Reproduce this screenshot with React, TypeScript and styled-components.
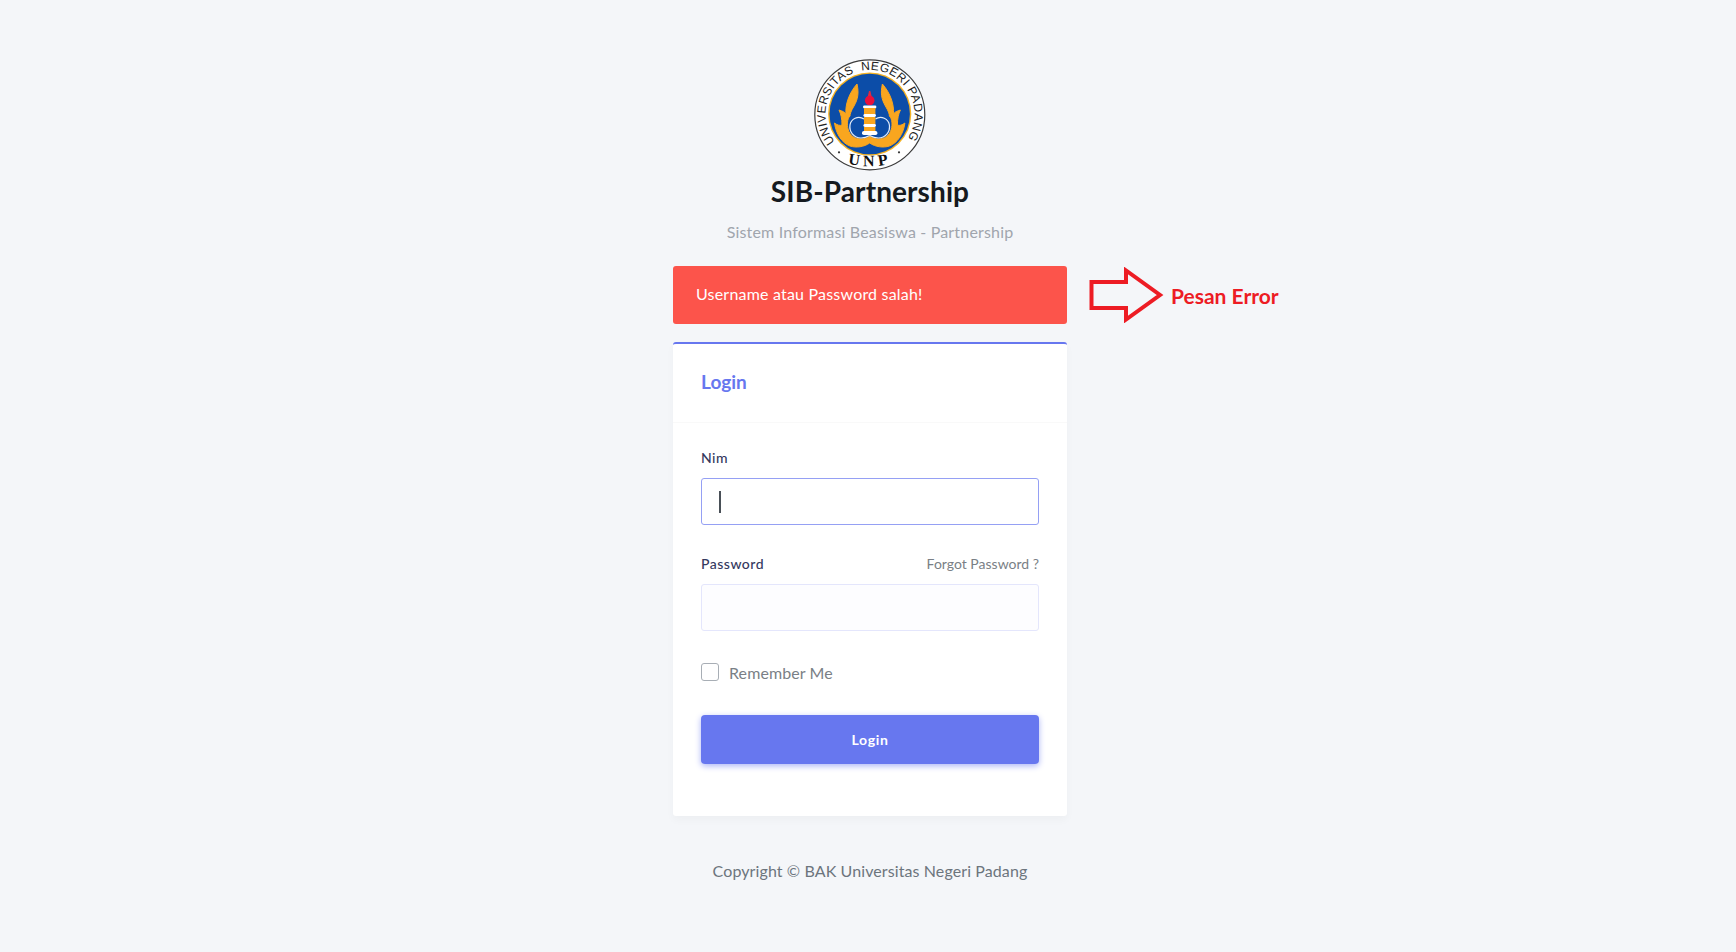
import React from 'react';
import styled, { createGlobalStyle } from 'styled-components';

const GlobalStyle = createGlobalStyle`
  html, body {
    margin: 0;
    padding: 0;
    background: #f4f6f9;
  }
  * {
    box-sizing: border-box;
  }
`;

const Page = styled.div`
  min-height: 952px;
  display: flex;
  flex-direction: column;
  align-items: center;
  padding: 59px 0 0 4px;
  font-family: Lato, "Noto Sans", sans-serif;
  color: #6b7280;
`;

const LogoWrap = styled.div`
  width: 112px;
  height: 112px;
`;

const Title = styled.h1`
  margin: 0;
  font-size: 28px;
  line-height: 40px;
  font-weight: 700;
  letter-spacing: 0.1px;
  color: #151a20;
`;

const Subtitle = styled.p`
  margin: 11px 0 0;
  font-size: 16px;
  line-height: 20px;
  letter-spacing: 0.18px;
  color: #a0a5ad;
`;

const Column = styled.div`
  width: 394px;
  margin-top: 24px;
  display: flex;
  flex-direction: column;
`;

const AlertRow = styled.div`
  position: relative;
`;

const Alert = styled.div`
  height: 58px;
  padding: 0 23px 3px;
  display: flex;
  align-items: center;
  background: #fc544b;
  border-radius: 3px;
  color: #fff;
  font-size: 16px;
  letter-spacing: 0.2px;
`;

const Annotation = styled.div`
  position: absolute;
  left: 416px;
  top: 2px;
  display: flex;
  align-items: center;
  gap: 7px;
  height: 54px;
`;

const AnnotationText = styled.span`
  font-family: Lato, sans-serif;
  font-size: 21px;
  font-weight: 700;
  color: #ed1c24;
  white-space: nowrap;
`;

const Card = styled.div`
  margin-top: 18px;
  height: 474px;
  background: #fff;
  border-top: 2px solid #6777ef;
  border-radius: 3px;
  box-shadow: 0 4px 8px rgba(0, 0, 0, 0.03);
  display: flex;
  flex-direction: column;
`;

const CardHeader = styled.div`
  height: 79px;
  padding: 0 28px 3px;
  display: flex;
  align-items: center;
  border-bottom: 1px solid #f9f9f9;
  font-size: 19px;
  font-weight: 700;
  color: #6777ef;
`;

const CardBody = styled.div`
  padding: 24px 28px 0;
  display: flex;
  flex-direction: column;
`;

const FieldGroup = styled.div`
  margin-bottom: 28px;
`;

const LabelRow = styled.div`
  display: flex;
  justify-content: space-between;
  align-items: center;
  height: 20px;
  margin-bottom: 11px;
`;

const Label = styled.label`
  font-size: 14px;
  letter-spacing: 0.5px;
  font-weight: 500;
  color: #34395e;
`;

const ForgotLink = styled.a`
  font-size: 14px;
  color: #7a7f86;
`;

const Input = styled.div<{ $focused?: boolean }>`
  height: 47px;
  padding-left: 17px;
  display: flex;
  align-items: center;
  background: ${(p) => (p.$focused ? '#fff' : '#fdfdff')};
  border: 1px solid ${(p) => (p.$focused ? '#95a0f4' : '#e4e6fc')};
  border-radius: 3px;
`;

const Caret = styled.span`
  width: 2px;
  height: 22px;
  background: #495057;
`;

const CheckRow = styled.div`
  display: flex;
  align-items: center;
  gap: 10px;
  height: 20px;
  margin-top: 3px;
`;

const CheckBox = styled.span`
  width: 18px;
  height: 18px;
  border: 1px solid #a8aeb5;
  border-radius: 3px;
  background: #fff;
`;

const CheckLabel = styled.span`
  font-size: 16px;
  letter-spacing: 0.1px;
  color: #7a7f86;
`;

const SubmitButton = styled.button`
  margin-top: 33px;
  height: 49px;
  border: 0;
  border-radius: 4px;
  background: #6777ef;
  box-shadow: 0 2px 6px #acb5f6;
  color: #fff;
  font-family: inherit;
  font-size: 14px;
  font-weight: 700;
  letter-spacing: 0.7px;
`;

const Footer = styled.div`
  margin-top: 45px;
  font-size: 16px;
  line-height: 20px;
  letter-spacing: 0.1px;
  color: #6c757d;
`;

const UnpLogo = () => (
  <svg width="112" height="112" viewBox="0 0 112 112">
    <defs>
      <path id="ring-top" d="M 21 82.9 A 44.5 44.5 0 1 1 91 82.9" />
      <path id="ring-bottom" d="M 21 100.8 A 100 100 0 0 0 91 100.8" />
      <path
        id="flame"
        d="M43 25 C45 34 44 40 40 47 C37 52 36 55 36 57 C33 60 33 66 34 70 C36 77 41 80 47 80 C50 80 53 79 55.7 77.5 L55.7 84 C50 88 42 89 36 87 C28 84 22 75 20.5 64 C23 66 26 67 28 66 C28 60 27 55 25 51 C28 52 31 53 32 55 C31 46 35 34 43 25 Z"
      />
      <path
        id="lobe"
        d="M50 60 C44 56 37 60 36 66 C35 73 40 79 47 79 C50 79 53 78 55.7 76.5"
      />
    </defs>
    <circle cx="55.8" cy="55.8" r="55" fill="#fff" stroke="#3b3b3b" strokeWidth="1.2" />
    <circle cx="55.7" cy="55" r="41.6" fill="#f5b324" />
    <circle cx="55.7" cy="55" r="40.2" fill="#0c4da8" />
    <use href="#flame" fill="#f9a61f" stroke="#f9a61f" strokeWidth="1" />
    <use href="#flame" fill="#f9a61f" stroke="#f9a61f" strokeWidth="1" transform="translate(111.4 0) scale(-1 1)" />
    <use href="#lobe" fill="none" stroke="#e3ecf8" strokeWidth="1.2" />
    <use href="#lobe" fill="none" stroke="#e3ecf8" strokeWidth="1.2" transform="translate(111.4 0) scale(-1 1)" />
    <path d="M55 32 L56.4 32 L58 39 L53.4 39 Z" fill="#e0293f" />
    <circle cx="55.7" cy="41.5" r="4.8" fill="#e8103c" />
    <rect x="49" y="46.5" width="13.4" height="3" rx="1.4" fill="#fff" />
    <rect x="50" y="49" width="11.4" height="6" fill="#f9a61f" />
    <rect x="49.4" y="55" width="12.6" height="3" rx="1.4" fill="#fff" />
    <rect x="50" y="58" width="11.4" height="7" fill="#f9a61f" />
    <rect x="49.4" y="65" width="12.6" height="3" rx="1.4" fill="#fff" />
    <rect x="50" y="68" width="11.4" height="4" fill="#f9a61f" />
    <rect x="48" y="72" width="15.4" height="4" rx="1.8" fill="#fff" />
    <text fontFamily="Liberation Sans, sans-serif" fontSize="12" fill="#222" letterSpacing="0.38">
      <textPath href="#ring-top">{'UNIVERSITAS\u00A0\u00A0NEGERI\u00A0PADANG'}</textPath>
    </text>
    <text
      fontFamily="Liberation Serif, serif"
      fontSize="16"
      fontWeight="700"
      fill="#111"
      letterSpacing="4"
    >
      <textPath href="#ring-bottom" startOffset="50%" textAnchor="middle">
        UNP
      </textPath>
    </text>
    <circle cx="25" cy="93.3" r="1.1" fill="#333" />
    <circle cx="85" cy="93.3" r="1.1" fill="#333" />
  </svg>
);

const ErrorArrow = () => (
  <svg width="75" height="56" viewBox="0 0 75 56">
    <path
      d="M2.5 15 L37 15 L37 3.5 L71 28 L37 52.5 L37 41 L2.5 41 Z"
      fill="none"
      stroke="#ed1c24"
      strokeWidth="4"
    />
  </svg>
);

export default function App() {
  return (
    <>
      <GlobalStyle />
      <Page>
        <LogoWrap>
          <UnpLogo />
        </LogoWrap>
        <Title>SIB-Partnership</Title>
        <Subtitle>Sistem Informasi Beasiswa - Partnership</Subtitle>
        <Column>
          <AlertRow>
            <Alert>Username atau Password salah!</Alert>
            <Annotation>
              <ErrorArrow />
              <AnnotationText>Pesan Error</AnnotationText>
            </Annotation>
          </AlertRow>
          <Card>
            <CardHeader>Login</CardHeader>
            <CardBody>
              <FieldGroup>
                <LabelRow>
                  <Label>Nim</Label>
                </LabelRow>
                <Input $focused>
                  <Caret />
                </Input>
              </FieldGroup>
              <FieldGroup>
                <LabelRow>
                  <Label>Password</Label>
                  <ForgotLink>Forgot Password ?</ForgotLink>
                </LabelRow>
                <Input />
              </FieldGroup>
              <CheckRow>
                <CheckBox />
                <CheckLabel>Remember Me</CheckLabel>
              </CheckRow>
              <SubmitButton>Login</SubmitButton>
            </CardBody>
          </Card>
        </Column>
        <Footer>Copyright © BAK Universitas Negeri Padang</Footer>
      </Page>
    </>
  );
}
